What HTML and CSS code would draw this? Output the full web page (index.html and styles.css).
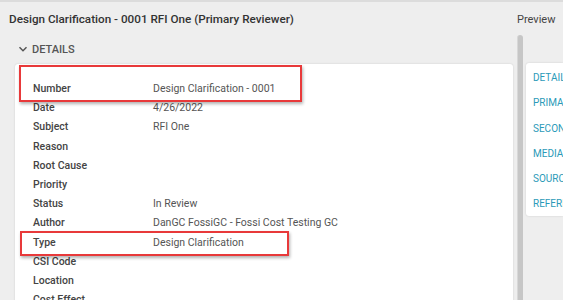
FILE: index.html
```html
<!DOCTYPE html>
<html lang="en">
<head>
    <meta charset="UTF-8">
    <title>Design Clarification - 0001</title>
    <link rel="stylesheet" href="styles.css">
</head>
<body>
    <div class="page">
        <div class="main">
            <h1 class="title">Design Clarification - 0001 RFI One (Primary Reviewer)</h1>
            <div class="section-head">
                <svg class="chevron" width="10" height="10" viewBox="0 0 10 10"><path d="M1.5 3.2 L5 6.7 L8.5 3.2" fill="none" stroke="#555" stroke-width="1.5"/></svg>
                <span>DETAILS</span>
            </div>
            <div class="card">
                <div class="row"><span class="label">Number</span><span class="value">Design Clarification - 0001</span></div>
                <div class="row"><span class="label">Date</span><span class="value">4/26/2022</span></div>
                <div class="row"><span class="label">Subject</span><span class="value">RFI One</span></div>
                <div class="row"><span class="label">Reason</span><span class="value"></span></div>
                <div class="row"><span class="label">Root Cause</span><span class="value"></span></div>
                <div class="row"><span class="label">Priority</span><span class="value"></span></div>
                <div class="row"><span class="label">Status</span><span class="value">In Review</span></div>
                <div class="row"><span class="label">Author</span><span class="value">DanGC FossiGC - Fossi Cost Testing GC</span></div>
                <div class="row"><span class="label">Type</span><span class="value">Design Clarification</span></div>
                <div class="row"><span class="label">CSI Code</span><span class="value"></span></div>
                <div class="row"><span class="label">Location</span><span class="value"></span></div>
                <div class="row"><span class="label">Cost Effect</span><span class="value"></span></div>
                <div class="mark mark-number"></div>
                <div class="mark mark-type"></div>
            </div>
        </div>
        <div class="scrollbar"><div class="thumb"></div></div>
        <div class="side">
            <div class="side-title">Preview</div>
            <ul class="nav">
                <li>DETAILS</li>
                <li>PRIMARY</li>
                <li>SECONDARY</li>
                <li>MEDIA</li>
                <li>SOURCE</li>
                <li>REFERENCES</li>
            </ul>
        </div>
    </div>
</body>
</html>
```

FILE: styles.css
```css
body {
    margin: 0;
    background: #eeeeee;
    font-family: Roboto, "Noto Sans", sans-serif;
    color: #444;
    overflow: hidden;
}
.page {
    display: flex;
    height: 300px;
    border-top: 2px solid #dcdcdc;
    box-sizing: border-box;
    overflow: hidden;
}
.main {
    width: 513px;
    flex: none;
}
.title {
    margin: 0;
    padding: 9px 0 0 9px;
    font-size: 11.7px;
    font-weight: 500;
    color: #333;
    line-height: 16px;
}
.section-head {
    display: flex;
    align-items: center;
    gap: 4px;
    padding: 15px 0 0 18px;
    height: 14px;
    font-size: 11px;
    font-weight: 500;
    color: #555;
}
.card {
    position: relative;
    margin: 8px 0 0 15px;
    background: #fff;
    border-radius: 3px;
    box-shadow: 0 0 2px rgba(0, 0, 0, 0.15);
    padding: 15px 0 0 18px;
    height: 260px;
}
.row {
    display: flex;
    height: 19.2px;
    line-height: 19.2px;
    font-size: 10.5px;
}
.label {
    width: 120px;
    font-weight: 500;
    color: #444;
}
.value {
    color: #555;
}
.mark {
    position: absolute;
    border: 2px solid #e8393a;
    box-shadow: 1px 2px 3px rgba(0, 0, 0, 0.3);
}
.mark-number {
    left: 4px;
    top: 1px;
    width: 279px;
    height: 33px;
}
.mark-type {
    left: 5px;
    top: 167px;
    width: 265px;
    height: 21px;
}
.scrollbar {
    width: 13px;
    flex: none;
    display: flex;
    justify-content: center;
    padding-top: 33px;
}
.thumb {
    width: 5px;
    background: #c6c6c6;
    border-left: 1px solid #d8d8d8;
    border-radius: 3px 3px 0 0;
}
.side {
    flex: 1;
    min-width: 0;
}
.side-title {
    padding: 10px 0 0 0;
    margin-left: -9px;
    font-size: 11px;
    color: #444;
    line-height: 16px;
}
.nav {
    list-style: none;
    margin: 35px 0 0 0;
    padding: 2px 0 0 7px;
    background: #fff;
    border-radius: 3px 0 0 3px;
    box-shadow: 0 0 2px rgba(0, 0, 0, 0.15);
    height: 153px;
    box-sizing: border-box;
    overflow: hidden;
    white-space: nowrap;
}
.nav li {
    height: 25.3px;
    line-height: 25.3px;
    font-size: 10px;
    color: #2b9ab8;
}
```
